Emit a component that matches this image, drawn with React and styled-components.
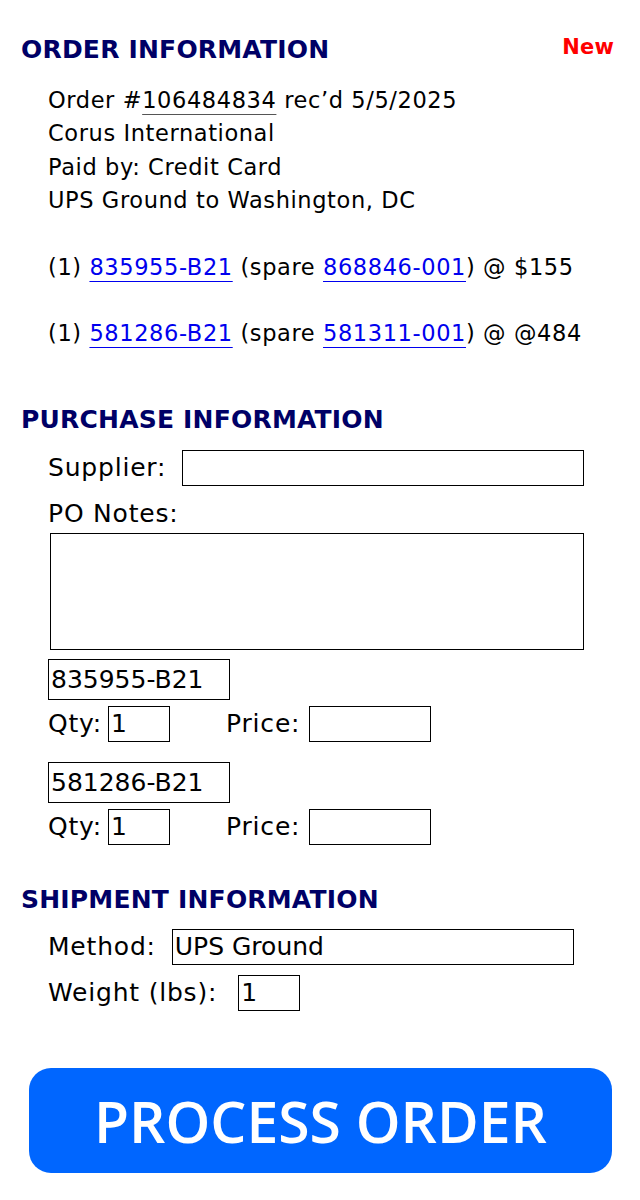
import React from "react";
import styled, { createGlobalStyle } from "styled-components";

const FONT = `"DejaVu Sans", "Open Sans", sans-serif`;

const Global = createGlobalStyle`
  html, body { margin: 0; padding: 0; background: #fff; }
  body { font-family: ${FONT}; color: #000; }
`;

const Page = styled.div`
  width: 640px;
  box-sizing: border-box;
  padding: 32px 28px 0 21px;
  display: flex;
  flex-direction: column;
`;

const HeaderRow = styled.div`
  display: flex;
  justify-content: space-between;
  align-items: flex-start;
`;

const Heading = styled.h2`
  margin: ${(p) => p.$mt || 0}px 0 0 0;
  font-size: 25px;
  line-height: 36px;
  font-weight: 700;
  color: #000066;
  letter-spacing: 0.2px;
`;

const Badge = styled.span`
  color: #ff0000;
  font-weight: 700;
  font-size: 21px;
  line-height: 30px;
  letter-spacing: 0.2px;
  margin-right: -2px;
`;

const Indent = styled.div`
  padding-left: 27px;
  display: flex;
  flex-direction: column;
`;

const Line = styled.div`
  font-size: 22.5px;
  line-height: 33.4px;
  letter-spacing: 0.6px;
  margin-top: ${(p) => p.$mt || 0}px;
  white-space: nowrap;
`;

const Underlined = styled.span`
  text-decoration: underline;
  text-decoration-color: #555;
  text-underline-offset: 6px;
  text-decoration-thickness: 1px;
`;

const PartLink = styled.a`
  color: #0000ee;
  text-decoration: underline;
  text-underline-offset: 6px;
  text-decoration-thickness: 1px;
`;

const FieldRow = styled.div`
  display: flex;
  align-items: center;
  margin-top: ${(p) => p.$mt || 0}px;
`;

const Label = styled.label`
  display: block;
  font-size: 25px;
  line-height: 36px;
  letter-spacing: 0.8px;
  white-space: nowrap;
  margin-left: ${(p) => p.$ml || 0}px;
  margin-top: ${(p) => p.$mt || 0}px;
`;

const Box = styled.div`
  box-sizing: border-box;
  border: 1px solid #000;
  width: ${(p) => p.$w}px;
  height: ${(p) => p.$h || 36}px;
  font-size: 25px;
  line-height: ${(p) => (p.$h || 36) - 2}px;
  padding-left: 2px;
  white-space: nowrap;
  overflow: hidden;
  margin-left: ${(p) => p.$ml || 0}px;
  margin-top: ${(p) => p.$mt || 0}px;
`;

const Notes = styled.div`
  box-sizing: border-box;
  border: 1px solid #000;
  width: 534px;
  height: 117px;
  margin-left: 2px;
  margin-top: 1px;
`;

const PartBlock = styled.div`
  display: flex;
  flex-direction: column;
  margin-top: ${(p) => p.$mt || 0}px;
`;

const Button = styled.button`
  margin: 57px 0 0 8px;
  width: 583px;
  height: 105px;
  border: none;
  border-radius: 22px;
  background: #0066ff;
  color: #fff;
  font-family: "Open Sans", "DejaVu Sans", sans-serif;
  font-weight: 600;
  font-size: 57px;
  padding: 0;
  cursor: pointer;
`;

const parts = [
  { part: "835955-B21", spare: "868846-001", price: "$155" },
  { part: "581286-B21", spare: "581311-001", price: "@484" },
];

export default function App() {
  return (
    <>
      <Global />
      <Page>
        <HeaderRow>
          <Heading>ORDER INFORMATION</Heading>
          <Badge>New</Badge>
        </HeaderRow>
        <Indent>
          <Line $mt={16}>
            Order #<Underlined>106484834</Underlined> rec’d 5/5/2025
          </Line>
          <Line>Corus International</Line>
          <Line>Paid by: Credit Card</Line>
          <Line>UPS Ground to Washington, DC</Line>
          {parts.map((p) => (
            <Line key={p.part} $mt={33}>
              (1) <PartLink href="#">{p.part}</PartLink> (spare{" "}
              <PartLink href="#">{p.spare}</PartLink>) @ {p.price}
            </Line>
          ))}
        </Indent>

        <Heading $mt={52}>PURCHASE INFORMATION</Heading>
        <Indent>
          <FieldRow $mt={12}>
            <Label>Supplier:</Label>
            <Box $w={402} $ml={16} />
          </FieldRow>
          <Label $mt={10}>PO Notes:</Label>
          <Notes />
          {parts.map((p, i) => (
            <PartBlock key={p.part} $mt={i === 0 ? 9 : 20}>
              <Box $w={182} $h={41}>{p.part}</Box>
              <FieldRow $mt={6}>
                <Label>Qty:</Label>
                <Box $w={62} $ml={6}>1</Box>
                <Label $ml={56}>Price:</Label>
                <Box $w={122} $ml={9} />
              </FieldRow>
            </PartBlock>
          ))}
        </Indent>

        <Heading $mt={37}>SHIPMENT INFORMATION</Heading>
        <Indent>
          <FieldRow $mt={11}>
            <Label>Method:</Label>
            <Box $w={402} $ml={16}>UPS Ground</Box>
          </FieldRow>
          <FieldRow $mt={10}>
            <Label>Weight (lbs):</Label>
            <Box $w={62} $ml={21}>1</Box>
          </FieldRow>
        </Indent>

        <Button>PROCESS ORDER</Button>
      </Page>
    </>
  );
}
